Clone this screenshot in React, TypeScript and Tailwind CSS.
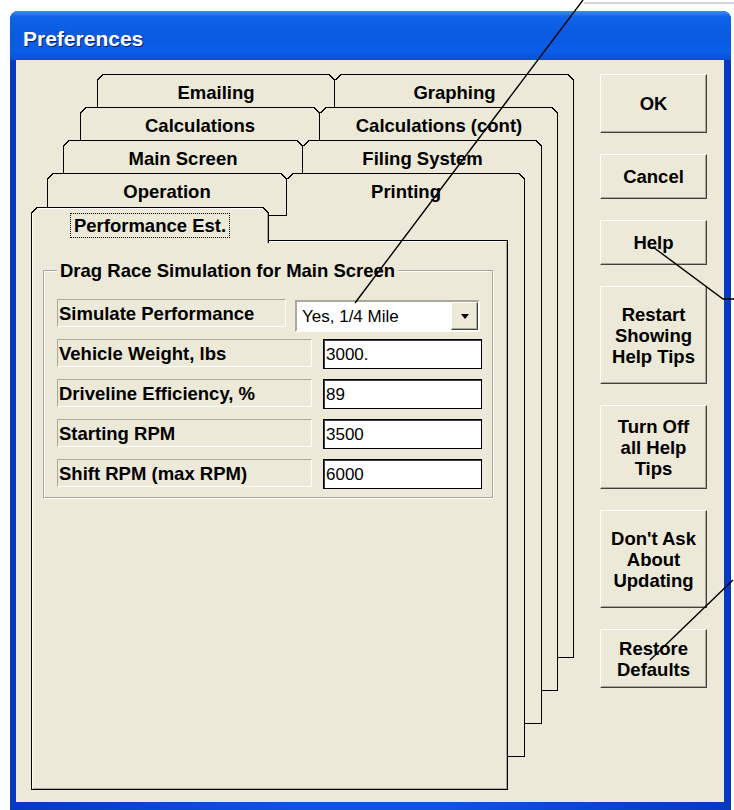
const tabRows = [
  { left: 'Emailing', right: 'Graphing', pos: 'left-[81px] top-[14px] w-[477px] h-[584px]', tabW: 'w-[238px]', notch: 'left-[237px]', rightLabel: 'left-[238px]' },
  { left: 'Calculations', right: 'Calculations (cont)', pos: 'left-[64px] top-[47px] w-[478px] h-[584px]', tabW: 'w-[240px]', notch: 'left-[239px]', rightLabel: 'left-[240px]' },
  { left: 'Main Screen', right: 'Filing System', pos: 'left-[47px] top-[80px] w-[479px] h-[584px]', tabW: 'w-[240px]', notch: 'left-[239px]', rightLabel: 'left-[240px]' },
  { left: 'Operation', right: 'Printing', pos: 'left-[31px] top-[113px] w-[478px] h-[584px]', tabW: 'w-[240px]', notch: 'left-[239px]', rightLabel: 'left-[240px]' },
];

const fields = [
  { label: 'Vehicle Weight, lbs', value: '3000.' },
  { label: 'Driveline Efficiency, %', value: '89' },
  { label: 'Starting RPM', value: '3500' },
  { label: 'Shift RPM (max RPM)', value: '6000' },
];

const buttons = [
  { lines: ['OK'], h: 'h-[59px]' },
  { lines: ['Cancel'], h: 'h-[45px]' },
  { lines: ['Help'], h: 'h-[45px]' },
  { lines: ['Restart', 'Showing', 'Help Tips'], h: 'h-[98px]' },
  { lines: ['Turn Off', 'all Help', 'Tips'], h: 'h-[84px]' },
  { lines: ["Don't Ask", 'About', 'Updating'], h: 'h-[98px]' },
  { lines: ['Restore', 'Defaults'], h: 'h-[59px]' },
];

// chamfered corners: beige triangle + black diagonal painted over the border corner
function CornerTL({ className = '-left-px -top-px' }: { className?: string }) {
  return (
    <span className={`absolute ${className} w-[6px] h-[6px] bg-[linear-gradient(135deg,#ece9d8_42%,#000_42%,#000_60%,transparent_60%)]`} />
  );
}

function CornerTR() {
  return (
    <span className="absolute -right-px -top-px w-[6px] h-[6px] bg-[linear-gradient(225deg,#ece9d8_42%,#000_42%,#000_60%,transparent_60%)]" />
  );
}

function BackPage({ row }: { row: (typeof tabRows)[number] }) {
  return (
    <div className={`absolute ${row.pos} border border-black bg-[#ece9d8]`}>
      <CornerTR />
      <div className={`absolute -left-px -top-px ${row.tabW} h-[43px] border border-black bg-[#ece9d8] text-center pt-[7px]`}>
        <CornerTL />
        <CornerTR />
        {row.left}
      </div>
      <CornerTL className={`${row.notch} -top-px`} />
      <div className={`absolute top-0 ${row.rightLabel} right-0 text-center pt-[7px]`}>{row.right}</div>
    </div>
  );
}

function FrontPage() {
  return (
    <div className="absolute left-[15px] top-[147px] w-[477px] h-[583px] flex flex-col">
      <div className="relative z-10 w-[238px] h-[36px] -mb-[3px] border border-b-0 border-black bg-[#ece9d8] shadow-[inset_1px_1px_0_#fff,inset_-1px_0_0_#aca899] flex justify-center pt-[5px]">
        <CornerTL />
        <CornerTR />
        <span className="h-[25px] border border-dotted border-black px-[3px] py-px">Performance Est.</span>
      </div>
      <div className="flex-1 border border-black bg-[#ece9d8] shadow-[inset_1px_1px_0_#fff,inset_-1px_-1px_0_#aca899] pl-[11px] pt-[29px]">
        <div className="relative w-[450px] h-[228px] border border-[#aca899] shadow-[inset_1px_1px_0_#fff,1px_1px_0_#fff] pl-[13px] pt-[28px] flex flex-col">
          <span className="absolute -top-[11px] left-[13px] px-[3px] bg-[#ece9d8]">Drag Race Simulation for Main Screen</span>

          <div className="flex h-[33px]">
            <div className="w-[229px] h-[28px] border border-t-[#aca899] border-l-[#aca899] border-b-white border-r-white pl-px flex items-center">
              Simulate Performance
            </div>
            <div className="ml-[9px] mt-px w-[185px] h-[32px] border-2 border-t-[#aca899] border-l-[#aca899] border-b-white border-r-white bg-white flex">
              <span className="flex-1 pl-[5px] flex items-center font-normal text-[17px]">Yes, 1/4 Mile</span>
              <span className="w-[27px] h-full border border-t-white border-l-white border-b-[#404040] border-r-[#404040] bg-[#ece9d8] shadow-[inset_-1px_-1px_0_#aca899] flex items-center justify-center">
                <span className="w-0 h-0 border-x-[4px] border-t-[5px] border-x-transparent border-t-black" />
              </span>
            </div>
          </div>

          <div className="flex flex-col gap-[10px] mt-[7px]">
            {fields.map((f) => (
              <div key={f.label} className="flex h-[30px]">
                <div className="w-[255px] h-[28px] border border-t-[#aca899] border-l-[#aca899] border-b-white border-r-white pl-px flex items-center">
                  {f.label}
                </div>
                <div className="ml-[11px] w-[159px] h-[30px] border border-black shadow-[inset_1px_1px_0_#404040] bg-white pl-[2px] flex items-center font-normal text-[17px]">
                  {f.value}
                </div>
              </div>
            ))}
          </div>
        </div>
      </div>
    </div>
  );
}

export default function App() {
  return (
    <div className="relative w-[734px] h-[810px] bg-white overflow-hidden font-['Liberation_Sans',Arial,sans-serif] text-black">
      <div className="ml-[10px] mt-[11px] w-[721px] h-[799px] rounded-t-[8px] bg-[linear-gradient(90deg,#0838c0,#0a55e0_40%,#0a55e0_60%,#0838c0)] flex flex-col overflow-hidden">
        {/* title bar */}
        <div className="h-[49px] shrink-0 rounded-t-[8px] bg-[linear-gradient(180deg,#3c8df6_0%,#0f63e8_12%,#0a5ae2_50%,#0b5ee8_82%,#0a4ed6_100%)] flex items-center pl-[13px] pt-[7px]">
          <span className="text-white font-bold text-[21px] [text-shadow:1px_1px_0_#0a1e6e]">Preferences</span>
        </div>

        {/* client area */}
        <div className="flex-1 ml-[6px] mr-[7px] mb-[8px] bg-[#ece9d8] flex font-bold text-[18.5px] leading-[21px]">
          <div className="relative w-[584px] h-full">
            {tabRows.map((row) => (
              <BackPage key={row.left} row={row} />
            ))}
            <FrontPage />
          </div>

          <div className="w-[107px] pt-[14px] flex flex-col gap-[21px]">
            {buttons.map((b) => (
              <div
                key={b.lines[0]}
                className={`${b.h} border border-t-white border-l-white border-b-[#404040] border-r-[#404040] shadow-[inset_-1px_-1px_0_#aca899] flex flex-col items-center justify-center text-center`}
              >
                {b.lines.map((l) => (
                  <span key={l}>{l}</span>
                ))}
              </div>
            ))}
          </div>
        </div>
      </div>

      {/* callout lines drawn over the screenshot */}
      <svg className="absolute inset-0 pointer-events-none" width="734" height="810" viewBox="0 0 734 810">
        <line x1="584" y1="3" x2="734" y2="3" stroke="#c8c8c8" strokeWidth="1.5" />
        <line x1="583" y1="0" x2="355" y2="303" stroke="#000" strokeWidth="1.4" />
        <polyline points="653,247 723,299 734,299" fill="none" stroke="#000" strokeWidth="1.4" />
        <line x1="650" y1="660" x2="733" y2="580" stroke="#000" strokeWidth="1.4" />
      </svg>
    </div>
  );
}
